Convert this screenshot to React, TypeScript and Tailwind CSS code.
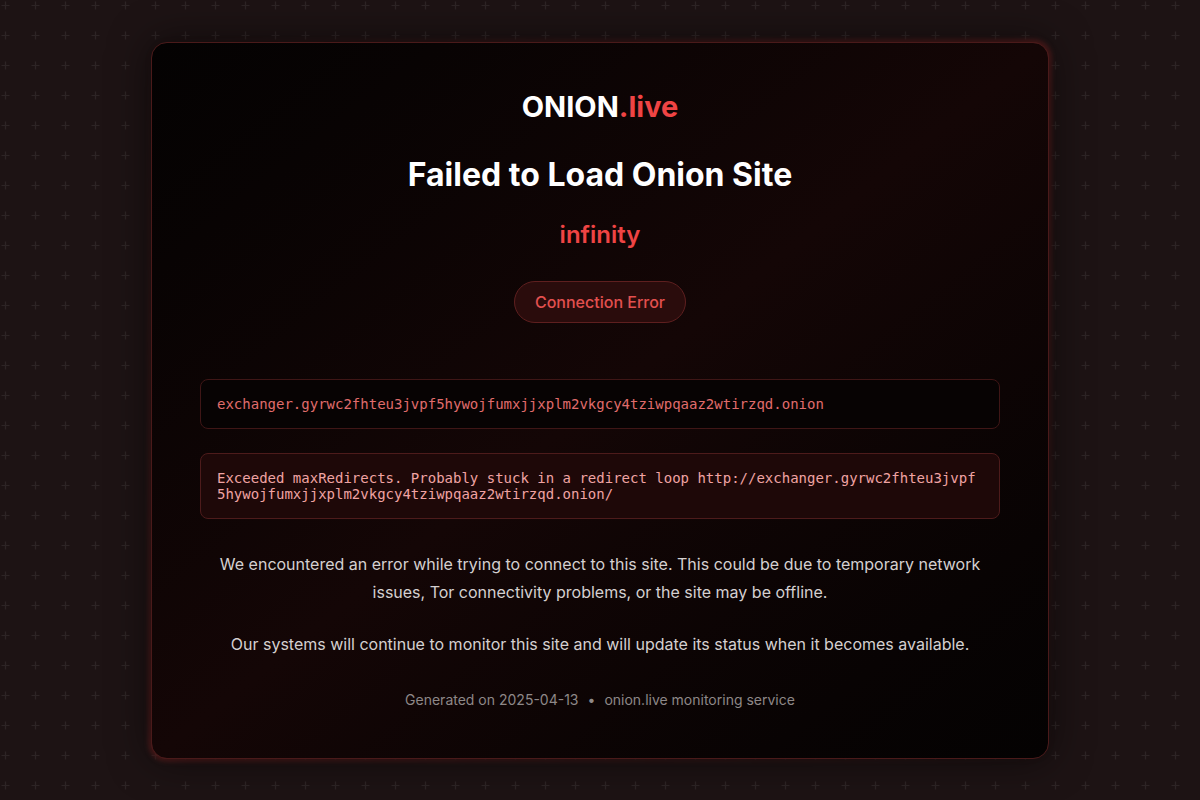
const PlusPattern = () => (
	<svg className="absolute inset-0 h-full w-full" aria-hidden="true">
		<defs>
			<pattern id="plus" width="30" height="30" patternUnits="userSpaceOnUse">
				<path d="M5.5 1.5v8M1.5 5.5h8" stroke="#ffffff" strokeOpacity="0.07" strokeWidth="1.2" />
			</pattern>
		</defs>
		<rect width="100%" height="100%" fill="url(#plus)" />
	</svg>
);

const App = () => (
	<div
		className="relative flex min-h-screen items-center justify-center overflow-hidden bg-[#1d1314]"
		style={{ fontFamily: 'Inter, "Noto Sans", sans-serif' }}
	>
		<PlusPattern />
		<div className="relative w-[898px]">
			{/* soft red rim behind the card */}
			<div className="absolute -inset-[3px] rounded-[19px] bg-linear-to-br from-transparent via-[#6b2020]/60 to-transparent blur-[2px]" />
			<div className="relative flex flex-col items-center rounded-2xl border border-[#4a1a1a] bg-linear-to-br from-[#040202] via-[#140606] to-[#040202] p-12 text-center shadow-[0_0_40px_rgba(0,0,0,0.55)]">
				<div className="text-[29px] leading-8 font-bold text-white">
					ONION<span className="text-[#ef4444]">.live</span>
				</div>
				<h1 className="mt-[34px] text-[32px] leading-9 font-bold text-white">Failed to Load Onion Site</h1>
				<div className="mt-[26px] text-2xl leading-8 font-semibold text-[#ef4444]">infinity</div>
				<div className="mt-[30px] rounded-full border border-[#5e1f1f] bg-[#2a0c0c] px-5 py-2 text-base leading-6 font-medium text-[#e2504f]">
					Connection Error
				</div>
				<div
					className="mt-14 w-full rounded-lg border border-[#3f1616] bg-[#070303] px-4 py-4 text-left text-sm leading-4 text-[#e06c6c]"
					style={{ fontFamily: '"DejaVu Sans Mono", monospace' }}
				>
					exchanger.gyrwc2fhteu3jvpf5hywojfumxjjxplm2vkgcy4tziwpqaaz2wtirzqd.onion
				</div>
				<div
					className="mt-6 w-full rounded-lg border border-[#4d1b1b] bg-[#1e0808] px-4 py-4 text-left text-sm leading-4 break-all text-[#f0a3a3]"
					style={{ fontFamily: '"DejaVu Sans Mono", monospace' }}
				>
					Exceeded maxRedirects. Probably stuck in a redirect loop http://exchanger.gyrwc2fhteu3jvpf5hywojfumxjjxplm2vkgcy4tziwpqaaz2wtirzqd.onion/
				</div>
				<p className="mt-[31px] text-base leading-7 text-[#d5d0d0]">
					We encountered an error while trying to connect to this site. This could be due to temporary network issues, Tor
					connectivity problems, or the site may be offline.
				</p>
				<p className="mt-6 text-base leading-7 text-[#d5d0d0]">
					Our systems will continue to monitor this site and will update its status when it becomes available.
				</p>
				<div className="mt-8 text-sm leading-5 text-[#8e8888]">
					Generated on 2025-04-13<span className="mx-[9px]">•</span>onion.live monitoring service
				</div>
			</div>
		</div>
	</div>
);

export default App;
